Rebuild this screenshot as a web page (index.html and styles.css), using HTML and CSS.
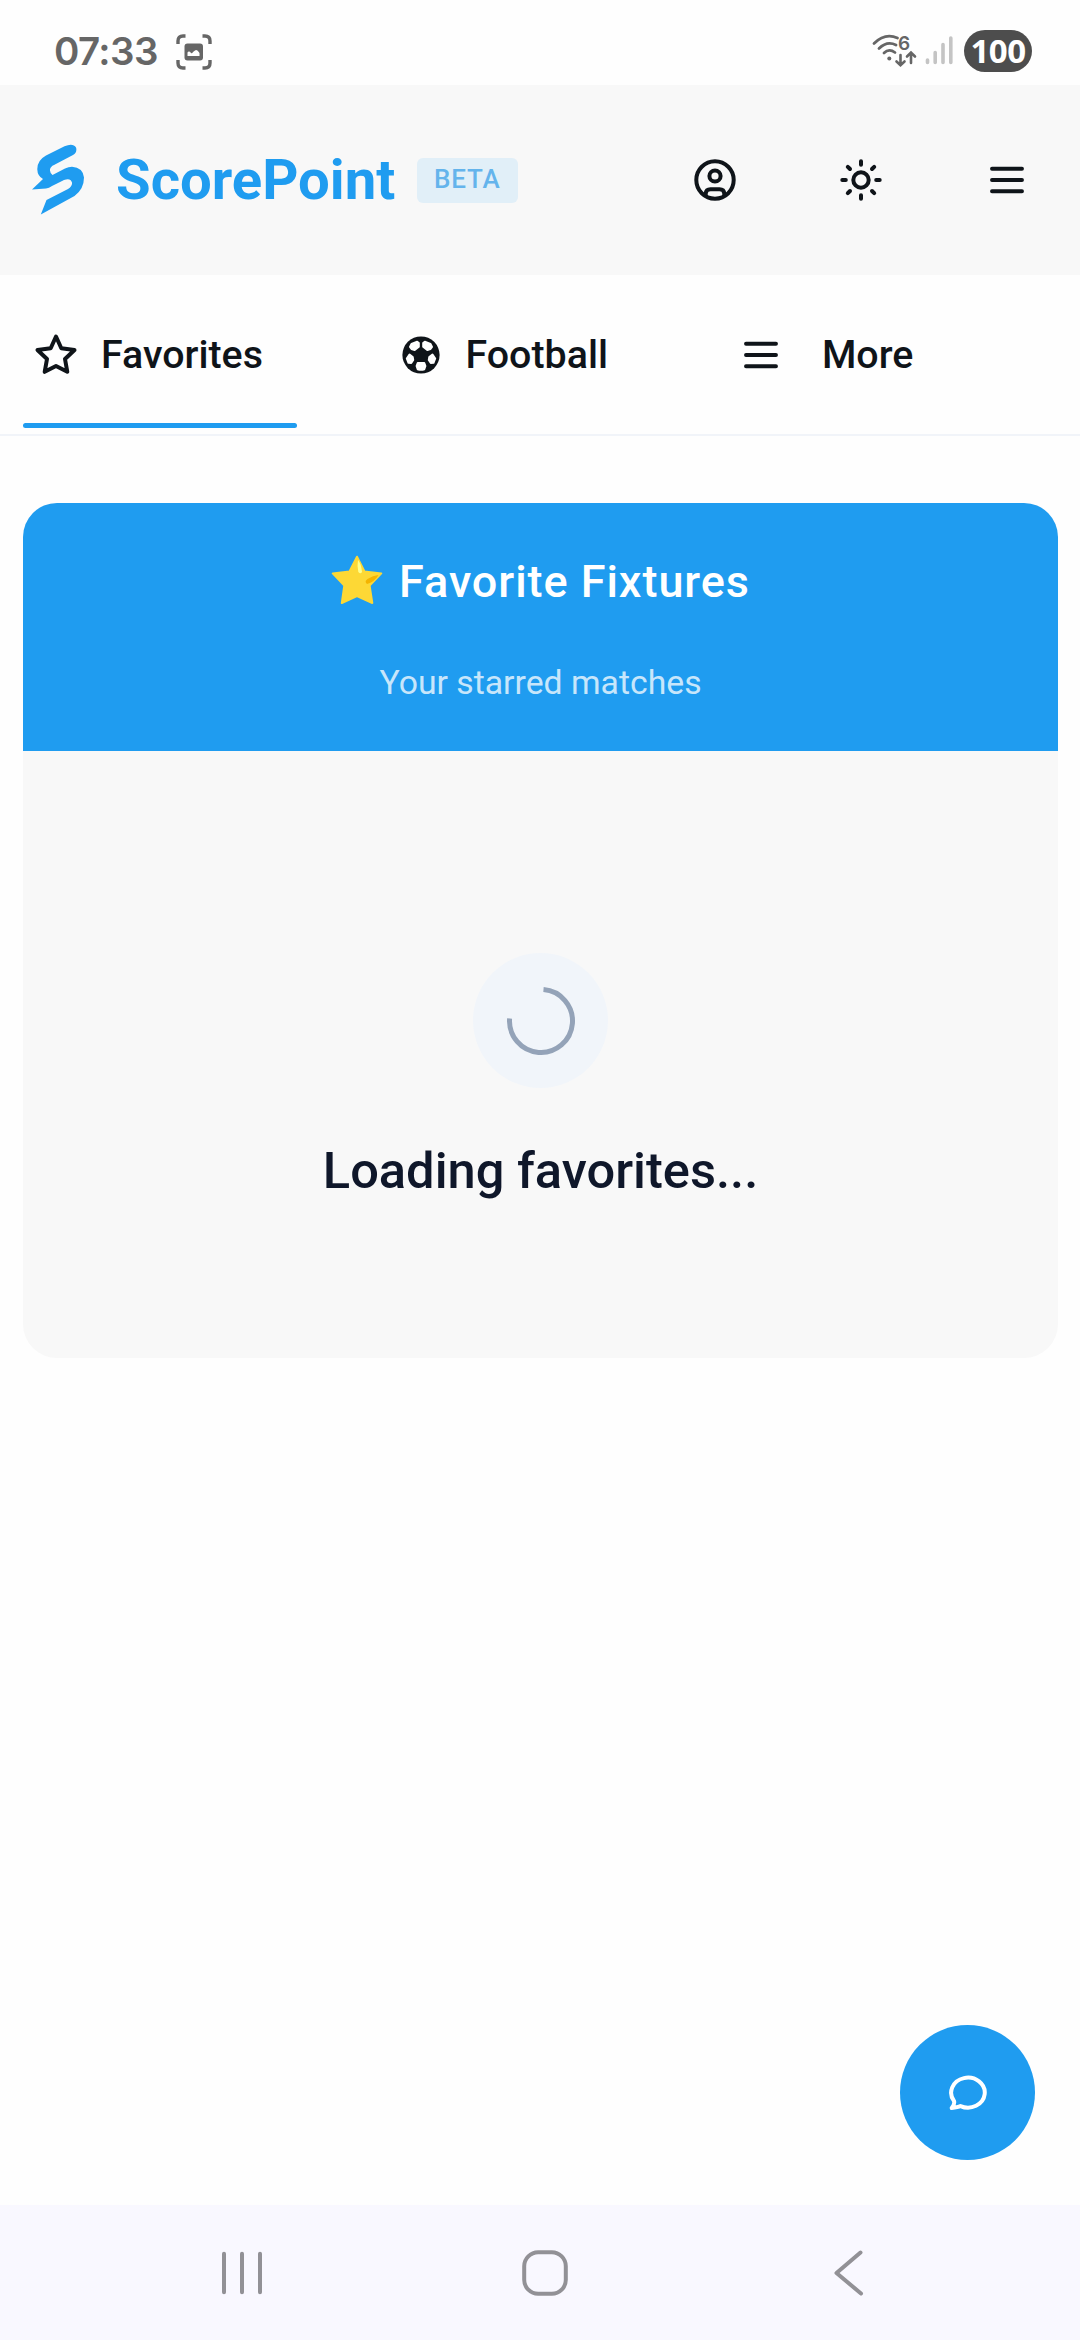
FILE: index.html
```html
<!DOCTYPE html>
<html lang="en">
<head>
<meta charset="utf-8">
<title>ScorePoint</title>
<link rel="stylesheet" href="styles.css">
</head>
<body>
<div class="status-bar">
  <div class="status-left">
    <span class="clock">07:33</span>
    <svg class="capture" width="36" height="36" viewBox="0 0 36 36">
      <path d="M2 10V7Q2 2 7 2H9.500M26.500 2H29Q34 2 34 7V10M34 26V29Q34 34 29 34H26.500M9.500 34H7Q2 34 2 29V26" fill="none" stroke="#666" stroke-width="3.400"/>
      <rect x="8.500" y="9.500" width="18.500" height="17" rx="3" fill="#666"/>
      <path d="M11.500 22V18.500Q13 16.500 15 19Q16 20 17 18L19 16.500Q21 15 23.500 19V22Z" fill="#fff"/>
    </svg>
  </div>
  <div class="status-right">
    <svg width="83" height="46" viewBox="0 -6 83 46">
      <g fill="none" stroke="#666" stroke-width="2.800" stroke-linecap="round">
        <path d="M2 9.500Q13 -1.500 25.500 4M7 14.500Q15 6.500 24 11M12 19Q17 14 23 18.500"/>
        <path d="M28.500 21V31M24.500 27.500L28.500 31.200L32.500 27.500M39 29V19.500M35 22.500L39 18.500L43 22.500" stroke-width="2.600"/>
      </g>
      <circle cx="17.300" cy="24.500" r="2" fill="#666"/>
      <text class="wifi-gen" x="26" y="15.500">6</text>
      <path d="M55.500 26V28.500M63.200 18.500V28.500M71 10.500V28.500M78.800 4V28.500" fill="none" stroke="#c4c4c4" stroke-width="3.600" stroke-linecap="round"/>
    </svg>
    <span class="battery">100</span>
  </div>
</div>

<header class="header">
  <svg class="logo" width="54" height="72" viewBox="0 0 54 72">
    <path d="M32.500 2.200L14 11.500Q5 16.500 5.300 25.500Q5.500 32 11 35L0 45.500L14 44.500Q17 44 20 42L32 36Q38.500 33.500 40 38.500Q40.500 42 36 45L14.500 56L8.800 70.500L42.500 52Q52 45 52 33.500Q51 23.500 40 22.700Q36.500 22.700 33 24.500L20.500 31Q17.500 28 18 25.500Q18.500 22.500 22 21L41 11Q45.500 8 44 3.500Q41 -1.500 32.500 2.200Z" fill="#1f9cf0"/>
  </svg>
  <span class="brand">ScorePoint</span>
  <span class="badge">BETA</span>
  <div class="actions">
    <svg width="46" height="46" viewBox="-23 -23 46 46" fill="none" stroke="#0f1419" stroke-width="4">
      <circle r="18.700"/><circle cy="-4" r="5.600"/>
      <path d="M-9.300 15.500V13.500Q-9 9.300 -4.500 9.300H4.500Q9 9.300 9.300 13.500V15.500"/>
    </svg>
    <svg width="46" height="46" viewBox="-23 -23 46 46" fill="none" stroke="#0f1419" stroke-width="4" stroke-linecap="round">
      <circle r="7.700"/>
      <path d="M0 -18.700V-15.200M0 18.700V15.200M-18.700 0H-15.200M18.700 0H15.200M-13.200 -13.200L-11 -11M13.200 13.200L11 11M-13.200 13.200L-11 11M13.200 -13.200L11 -11"/>
    </svg>
    <svg width="46" height="46" viewBox="-23 -23 46 46" fill="none" stroke="#0f1419" stroke-width="3.900" stroke-linecap="round">
      <path d="M-15 -11.200H15M-15 0H15M-15 11.200H15"/>
    </svg>
  </div>
</header>

<nav class="tabs">
  <a class="tab tab-active">
    <svg width="46" height="46" viewBox="-23 -23 46 46" fill="none" stroke="#0f1419" stroke-width="4" stroke-linejoin="round">
      <path d="M0 -18.500L5.300 -6.700L18.500 -5L9 4L11.300 16.800L0 11L-11.300 16.800L-9 4L-18.500 -5L-5.300 -6.700Z"/>
    </svg>
    <span class="tab-label">Favorites</span>
  </a>
  <a class="tab tab-football">
    <svg width="46" height="46" viewBox="-23 -23 46 46">
      <circle r="18.600" fill="#0f1419"/>
      <g fill="#fff" stroke="#fff" stroke-width="2" stroke-linejoin="round">
        <path d="M-9.500 -11L-3.800 -13.200L-2.200 -12V-8.300L-6.300 -5L-9.500 -6L-11 -8Z"/>
        <path d="M9.500 -11L3.800 -13.200L2.200 -12V-8.300L6.300 -5L9.500 -6L11 -8Z"/>
        <path d="M-11.500 -.500L-8.300 2L-7.800 5L-9.800 8L-12.500 7.800L-14.200 3.500Z"/>
        <path d="M11.500 -.500L8.300 2L7.800 5L9.800 8L12.500 7.800L14.200 3.500Z"/>
        <path d="M-3.300 8H3.300L4.400 11L3.300 14.200Q0 15.300 -3.300 14.200L-4.400 11Z"/>
      </g>
    </svg>
    <span class="tab-label">Football</span>
  </a>
  <a class="tab tab-more">
    <svg width="46" height="46" viewBox="-23 -23 46 46" fill="none" stroke="#0f1419" stroke-width="3.900" stroke-linecap="round">
      <path d="M-15 -11.200H15M-15 0H15M-15 11.200H15"/>
    </svg>
    <span class="tab-label">More</span>
  </a>
</nav>

<main class="content">
  <section class="card">
    <div class="card-head">
      <h1 class="card-title">
        <svg width="52" height="50" viewBox="0 0 52 50">
          <path d="M26 1.700L33.500 16.500L50.300 18.400L38.600 30.500L41.300 48L26 41L10.800 48L13.300 30.500L1.700 18.400L18.500 16.500Z" fill="#fdd835" stroke="#fdd835" stroke-width="2" stroke-linejoin="round"/>
          <path d="M27 5Q30 8 31 17Q29.500 19.500 27.300 17Q26 11 27 5Z" fill="#ffff8d"/>
          <path d="M47.500 20Q43.500 27 36 29Q33 26.500 36.500 24Q42 20.500 47.500 20Z" fill="#f4b400"/>
        </svg>
        <span>Favorite Fixtures</span>
      </h1>
      <p class="card-subtitle">Your starred matches</p>
    </div>
    <div class="card-body">
      <div class="spinner">
        <svg width="70" height="70" viewBox="-35 -35 70 70">
          <path d="M2.500 -31.400A31.500 31.500 0 1 1 -31.400 -2.500" fill="none" stroke="#94a3b8" stroke-width="5"/>
        </svg>
      </div>
      <p class="loading">Loading favorites...</p>
    </div>
  </section>
</main>

<button class="chat">
  <svg width="42" height="42" viewBox="-21 -21 42 42">
    <path d="M-16.300 15Q-13 11 -14 8A16.800 15 0 1 1 -7.500 13.100Q-10 14.500 -16.300 15Z" fill="none" stroke="#fff" stroke-width="4" stroke-linejoin="round"/>
  </svg>
</button>

<footer class="system-nav">
  <svg width="48" height="48" viewBox="-24 -24 48 48"><path d="M-18 -19.200V19.200M0 -19.200V19.200M18 -19.200V19.200"/></svg>
  <svg width="48" height="48" viewBox="-24 -24 48 48"><rect x="-20.800" y="-20.800" width="41.600" height="41.600" rx="14"/></svg>
  <svg width="48" height="48" viewBox="-24 -24 48 48"><path d="M12.500 -20.500L-11.500 0L13 20.500"/></svg>
</footer>
</body>
</html>
```
FILE: styles.css
```css
* { box-sizing: border-box; }
body {
  margin: 0;
  height: 2340px;
  display: flex;
  flex-direction: column;
  background: #fefefe;
  color: #0f1419;
  font-family: Roboto, sans-serif;
}
svg { display: block; flex: none; }
h1, p { margin: 0; }

.status-bar {
  height: 85px;
  display: flex;
  justify-content: space-between;
  padding: 0 48px 0 54px;
}
.status-left { display: flex; align-items: center; height: 102px; gap: 19px; }
.clock {
  width: 103px;
  white-space: nowrap;
  font: 600 38.5px/48px Inter, sans-serif;
  letter-spacing: -0.6px;
  color: #666;
}
.capture { margin-top: 1px; }
.status-right { display: flex; align-items: center; height: 102px; gap: 9px; }
.wifi-gen { font: 600 19px Inter, sans-serif; fill: #666; }
.battery {
  width: 68px;
  height: 42px;
  border-radius: 21px;
  background: #4d4d4d;
  color: #fff;
  font: 700 33px/42px "Open Sans", sans-serif;
  letter-spacing: -0.5px;
  text-align: center;
}

.header {
  height: 190px;
  display: flex;
  align-items: center;
  padding: 0 50px 0 32px;
  background: #f8f8f8;
}
.brand {
  width: 279px;
  margin-left: 30px;
  font-size: 56.25px;
  font-weight: 700;
  line-height: 66px;
  color: #1f9cf0;
}
.badge {
  width: 101px;
  height: 45px;
  margin-left: 22px;
  padding-left: 17px;
  border-radius: 6px;
  background: #e1eff8;
  color: #64b4ec;
  font-size: 26px;
  font-weight: 500;
  line-height: 42px;
  letter-spacing: 0.8px;
}
.actions { display: flex; gap: 100px; margin-left: auto; }

.tabs {
  height: 161px;
  display: flex;
  padding-left: 23px;
  border-bottom: 2px solid #f1f4f9;
}
.tab {
  height: 153px;
  display: flex;
  align-items: center;
  padding: 7px 0 0 10px;
  gap: 22px;
  font-size: 39.375px;
  font-weight: 500;
}
.tab-label { padding-bottom: 2px; }
.tab-active { position: relative; width: 274px; }
.tab-active::after {
  content: "";
  position: absolute;
  left: 0;
  right: 0;
  bottom: 0;
  height: 5px;
  border-radius: 3px;
  background: #1f9cf0;
}
.tab-football { margin-left: 90.5px; }
.tab-more { margin-left: 120px; gap: 38px; }

.content { flex: 1; padding: 67px 22px 0 23px; }
.card {
  height: 855px;
  border-radius: 34px;
  overflow: hidden;
  background: #f8f8f8;
}
.card-head {
  height: 248px;
  padding-top: 52px;
  background: #1f9cf0;
  color: #fff;
}
.card-title {
  display: flex;
  justify-content: center;
  gap: 16px;
  font-size: 45px;
  font-weight: 500;
  line-height: 54px;
  letter-spacing: 0.95px;
}
.card-subtitle {
  margin-top: 54px;
  text-align: center;
  font-size: 33.75px;
  line-height: 40px;
  color: #c7e6fb;
}
.card-body {
  display: flex;
  flex-direction: column;
  align-items: center;
  padding-top: 202px;
}
.spinner {
  width: 135px;
  height: 135px;
  display: grid;
  place-items: center;
  border-radius: 50%;
  background: #f1f5fa;
}
.loading {
  margin-top: 52px;
  font-size: 50.625px;
  font-weight: 500;
  line-height: 61px;
  color: #0f172a;
}

.chat {
  position: absolute;
  left: 900px;
  top: 2025px;
  width: 135px;
  height: 135px;
  display: grid;
  place-items: center;
  padding: 0;
  border: 0;
  border-radius: 50%;
  background: #1f9cf0;
}

.system-nav {
  height: 135px;
  display: flex;
  justify-content: space-between;
  align-items: center;
  padding: 0 208px 0 218px;
  background: #f9f8ff;
}
.system-nav svg { fill: none; stroke: #929196; stroke-width: 4; stroke-linecap: round; stroke-linejoin: round; }
```
